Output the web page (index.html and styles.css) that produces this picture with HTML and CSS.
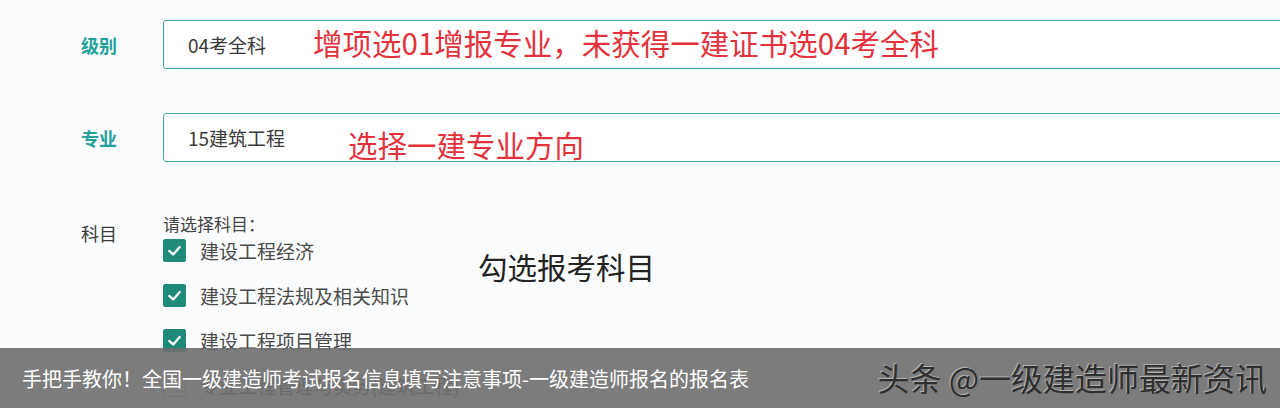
FILE: index.html
```html
<!DOCTYPE html>
<html lang="zh-CN">
<head>
<meta charset="utf-8">
<title>报名信息填写</title>
<link rel="stylesheet" href="styles.css">
</head>
<body>
<div class="page">
  <div class="form">
    <div class="row row-input">
      <div class="label label-teal">级别</div>
      <div class="field">
        <span class="value">04考全科</span>
        <span class="note note-1">增项选01增报专业，未获得一建证书选04考全科</span>
      </div>
    </div>
    <div class="row row-input">
      <div class="label label-teal">专业</div>
      <div class="field">
        <span class="value">15建筑工程</span>
        <span class="note note-2">选择一建专业方向</span>
      </div>
    </div>
    <div class="row row-subjects">
      <div class="label label-dark">科目</div>
      <div class="subjects">
        <div class="heading">请选择科目：</div>
        <div class="item">
          <span class="box checked"><svg viewBox="0 0 24 24" width="24" height="24"><polyline points="6,12.5 10.5,16.5 18,8" fill="none" stroke="#fff" stroke-width="2.6" stroke-linecap="round" stroke-linejoin="round"/></svg></span>
          <span class="item-text">建设工程经济</span>
        </div>
        <div class="item">
          <span class="box checked"><svg viewBox="0 0 24 24" width="24" height="24"><polyline points="6,12.5 10.5,16.5 18,8" fill="none" stroke="#fff" stroke-width="2.6" stroke-linecap="round" stroke-linejoin="round"/></svg></span>
          <span class="item-text">建设工程法规及相关知识</span>
        </div>
        <div class="item">
          <span class="box checked"><svg viewBox="0 0 24 24" width="24" height="24"><polyline points="6,12.5 10.5,16.5 18,8" fill="none" stroke="#fff" stroke-width="2.6" stroke-linecap="round" stroke-linejoin="round"/></svg></span>
          <span class="item-text">建设工程项目管理</span>
        </div>
        <div class="item">
          <span class="box"></span>
          <span class="item-text">专业工程管理与实务(建筑工程)</span>
        </div>
      </div>
      <div class="note-black">勾选报考科目</div>
    </div>
  </div>
  <div class="caption">
    <span class="caption-text">手把手教你！全国一级建造师考试报名信息填写注意事项-一级建造师报名的报名表</span>
    <span class="watermark">头条 @一级建造师最新资讯</span>
  </div>
</div>
</body>
</html>
```

FILE: styles.css
```css
* { box-sizing: border-box; }
html, body {
  margin: 0;
  padding: 0;
  background: #fbfcfd;
}
body {
  font-family: "Noto Sans CJK SC", "Noto Sans", sans-serif;
  overflow: hidden;
}
.page {
  position: relative;
  width: 1280px;
  height: 408px;
  overflow: hidden;
}
.form {
  padding-top: 20px;
}
.row {
  display: grid;
  grid-template-columns: 163px 1fr;
}
.row-input {
  height: 49px;
  margin-bottom: 44px;
}
.row-input + .row-input {
  margin-bottom: 51px;
}
.label {
  padding-left: 81px;
  font-size: 18px;
  line-height: 22px;
}
.row-input .label {
  align-self: center;
}
.label-teal {
  color: #22a09c;
  font-weight: 700;
}
.label-dark {
  color: #3a3a3a;
  padding-top: 9px;
}
.field {
  display: flex;
  align-items: center;
  padding-left: 24px;
  margin-right: -20px;
  background: #ffffff;
  border: 1.5px solid #4aa5a0;
  border-radius: 3px;
}
.value {
  font-size: 19px;
  color: #3a3a3a;
  line-height: 24px;
}
.note {
  font-size: 29.5px;
  line-height: 34px;
  color: #e3323c;
  white-space: nowrap;
}
.note-1 {
  margin-left: 47px;
  margin-top: -6px;
}
.note-2 {
  margin-left: 63px;
  margin-top: 12px;
}
.row-subjects {
  grid-template-columns: 163px 315px 1fr;
}
.subjects {
  display: flex;
  flex-direction: column;
  gap: 21px;
}
.heading {
  font-size: 17px;
  line-height: 22px;
  color: #444;
  margin-bottom: -18px;
}
.item {
  display: flex;
  align-items: center;
  height: 24px;
  gap: 14px;
}
.box {
  width: 23px;
  height: 23px;
  border: 1.5px solid #9a9a9a;
  border-radius: 2px;
  background: #fff;
  display: flex;
  align-items: center;
  justify-content: center;
  flex: none;
}
.box.checked {
  background: #1f8a7a;
  border-color: #1f8a7a;
}
.box svg {
  width: 21px;
  height: 21px;
}
.item-text {
  font-size: 19px;
  color: #4a4a4a;
  white-space: nowrap;
}
.note-black {
  font-size: 29.5px;
  line-height: 32px;
  color: #222;
  margin-top: 37px;
  align-self: start;
}
.caption {
  position: absolute;
  left: 0;
  right: 0;
  bottom: 0;
  height: 60px;
  display: flex;
  align-items: center;
  justify-content: space-between;
  padding: 0 13px 0 22px;
  background: rgba(110, 110, 110, 0.9);
}
.caption-text {
  font-size: 20px;
  color: #ffffff;
  white-space: nowrap;
}
.watermark {
  font-size: 32px;
  color: #2e2e2e;
  white-space: nowrap;
  text-shadow: -1px -1px 0 rgba(225, 225, 225, 0.55);
  margin-top: -2px;
}
```
